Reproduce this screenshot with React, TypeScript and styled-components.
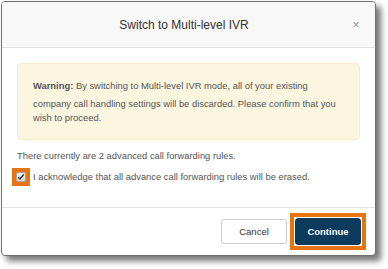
import React from "react";
import styled, { createGlobalStyle } from "styled-components";

const Global = createGlobalStyle`
  html, body { margin: 0; padding: 0; background: #fff; }
  body { font-family: "Liberation Sans", Arial, sans-serif; }
  * { box-sizing: border-box; }
`;

const Page = styled.div`
  padding: 1px 0 0 1px;
  width: 388px;
  height: 269px;
`;

const Dialog = styled.div`
  width: 375px;
  height: 255px;
  border: 1px solid #6f6f6f;
  border-radius: 4px;
  background: #fff;
  box-shadow: 5px 5px 6px rgba(0, 0, 0, 0.55);
  display: flex;
  flex-direction: column;
  overflow: hidden;
`;

const Header = styled.div`
  height: 46px;
  flex: none;
  background: #f8f8f8;
  border-bottom: 1px solid #e3e3e3;
  display: flex;
  align-items: center;
  padding: 0 14px 0 15px;
`;

const Title = styled.h4`
  flex: 1;
  margin: 0;
  text-align: center;
  font-size: 12px;
  font-weight: normal;
  color: #333;
  padding-top: 1px;
`;

const Close = styled.button`
  width: 10px;
  padding: 0;
  border: 0;
  background: none;
  font-family: "Liberation Sans", Arial, sans-serif;
  font-size: 12px;
  line-height: 12px;
  color: #999;
  text-align: center;
`;

const Body = styled.div`
  flex: 1;
  padding: 15px 15px 0 15px;
  font-size: 9.4px;
  color: #555;
`;

const Alert = styled.div`
  background: #fcf6e1;
  border: 1px solid #f8ecc9;
  border-radius: 4px;
  padding: 11px 15px 14px 15px;
  line-height: 14px;
  margin-bottom: 9px;
`;

const Strong = styled.strong`
  line-height: 22px;
  font-weight: bold;
  color: #555;
`;

const Info = styled.p`
  margin: 0;
  line-height: 14px;
`;

const CheckRow = styled.label`
  display: flex;
  align-items: center;
  gap: 3px;
  margin-top: 5px;
  margin-left: -5px;
  line-height: 14px;
`;

const Highlight = styled.span`
  display: inline-flex;
  border: 4px solid #e8740f;
  background: #e8740f;
`;

const CheckBox = styled.span`
  width: 10px;
  height: 10px;
  display: flex;
  align-items: center;
  justify-content: center;
  border: 1px solid #a9a9a9;
  border-radius: 2px;
  background: linear-gradient(#f0f0f0, #d8d8d8);
`;

const Footer = styled.div`
  height: 48px;
  flex: none;
  border-top: 1px solid #e3e3e3;
  display: flex;
  align-items: center;
  justify-content: flex-end;
  gap: 3px;
  padding-right: 9px;
`;

const Button = styled.button<{ $primary?: boolean }>`
  width: 66px;
  height: ${(p) => (p.$primary ? "27px" : "25px")};
  border-radius: 3px;
  font-family: "Liberation Sans", Arial, sans-serif;
  font-size: 9.5px;
  font-weight: ${(p) => (p.$primary ? "bold" : "normal")};
  color: ${(p) => (p.$primary ? "#fff" : "#333")};
  background: ${(p) => (p.$primary ? "#0d3b5e" : "#fff")};
  border: 1px solid ${(p) => (p.$primary ? "#0d3b5e" : "#cccccc")};
  padding: 0;
`;

const ButtonFrame = styled.span`
  display: inline-flex;
  border: 4px solid #e8740f;
  padding: 1px;
  background: #fff;
`;

export default function App() {
  return (
    <Page>
      <Global />
      <Dialog>
        <Header>
          <Title>Switch to Multi-level IVR</Title>
          <Close aria-label="Close">×</Close>
        </Header>
        <Body>
          <Alert>
            <Strong>Warning:</Strong> By switching to Multi-level IVR mode, all of your existing
            company call handling settings will be discarded. Please confirm that you wish to
            proceed.
          </Alert>
          <Info>There currently are 2 advanced call forwarding rules.</Info>
          <CheckRow>
            <Highlight>
              <CheckBox>
                <svg width="8" height="8" viewBox="0 0 8 8">
                  <path d="M1.2 4.2 L3 6 L6.8 1.6" fill="none" stroke="#333" strokeWidth="1.5" />
                </svg>
              </CheckBox>
            </Highlight>
            <span>I acknowledge that all advance call forwarding rules will be erased.</span>
          </CheckRow>
        </Body>
        <Footer>
          <Button>Cancel</Button>
          <ButtonFrame>
            <Button $primary>Continue</Button>
          </ButtonFrame>
        </Footer>
      </Dialog>
    </Page>
  );
}
